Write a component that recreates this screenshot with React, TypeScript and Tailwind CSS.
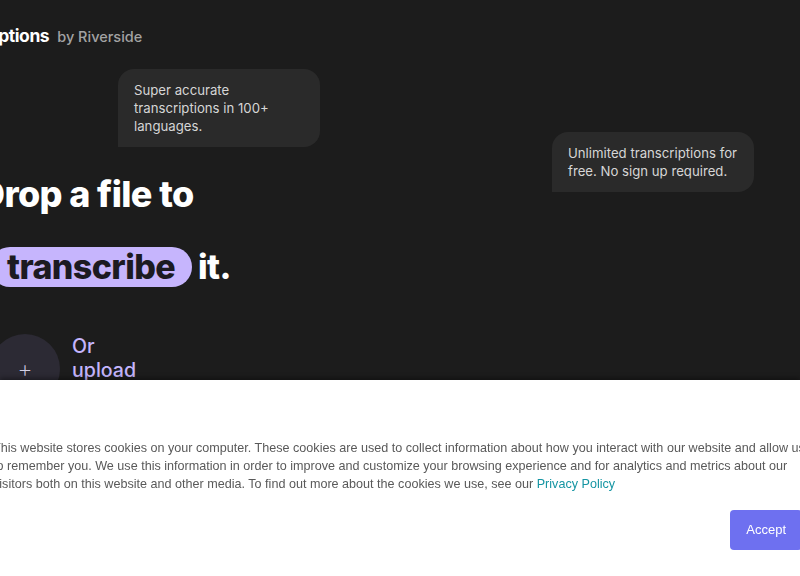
import React from 'react';

const cookieLines = [
  'This website stores cookies on your computer. These cookies are used to collect information about how you interact with our website and allow us',
  'to remember you. We use this information in order to improve and customize your browsing experience and for analytics and metrics about our',
];

const Bubble = ({ text, className }: { text: string; className: string }) => (
  <div
    className={`absolute w-[202px] rounded-2xl rounded-bl-none bg-[#2a2a2a] px-4 py-3 text-[13.2px] leading-[18px] text-[#d6d6d6] ${className}`}
  >
    {text}
  </div>
);

export default function App() {
  return (
    <div className="relative h-[576px] w-[800px] overflow-hidden bg-[#1c1c1c] font-['Inter',sans-serif]">
      <header className="flex items-baseline gap-2 pt-[23px] -ml-[69px]">
        <span className="text-[17.5px] font-bold tracking-tight text-white">Transcriptions</span>
        <span className="text-[14.5px] font-medium text-[#a3a3a3]">by Riverside</span>
      </header>

      <main className="relative h-[520px]">
        <Bubble text="Super accurate transcriptions in 100+ languages." className="left-[118px] top-[20px]" />
        <Bubble text="Unlimited transcriptions for free. No sign up required." className="left-[552px] top-[83px]" />

        <div className="flex flex-col pt-[123px] -ml-[21px]">
          <h1 className="text-[36px] font-extrabold leading-[44px] tracking-[-0.6px] text-white">Drop a file to</h1>
          <div className="mt-[31px] flex items-center gap-[6px] text-[34px] font-extrabold leading-[40px] tracking-[-0.6px] text-white">
            <span className="ml-[11px] rounded-full bg-[#c6b5fd] px-[17px] text-[#1c1a22]">transcribe</span>
            <span>it.</span>
          </div>
          <div className="mt-[47px] ml-[11px] flex items-start gap-[12px]">
            <div className="flex h-[70px] w-[70px] items-center justify-center rounded-full bg-[#2c2a34] text-[24px] font-extralight text-[#d4d2e6]">
              +
            </div>
            <div className="w-[72px] text-[19.6px] font-medium leading-[24px] text-[#c4b5fd]">
              Or upload a file
            </div>
          </div>
        </div>
      </main>

      <div className="fixed bottom-0 left-0 h-[196px] w-[800px] bg-white shadow-[0_-2px_5px_rgba(0,0,0,0.4)] font-['Liberation_Sans',Arial,sans-serif]">
        <div className="-ml-[7px] pt-[59px] text-[12.6px] leading-[18px] text-[#595959]">
          {cookieLines.map((line) => (
            <div key={line} className="whitespace-nowrap">
              {line}
            </div>
          ))}
          <div className="whitespace-nowrap">
            visitors both on this website and other media. To find out more about the cookies we use, see our{' '}
            <a className="text-[#1595a3]">Privacy Policy</a>
          </div>
        </div>
        <div className="flex justify-end pt-[17px] -mr-[2px]">
          <button className="h-[40px] rounded-[4px] bg-[#6e70f0] px-[16px] text-[13px] text-white">Accept</button>
        </div>
      </div>
    </div>
  );
}
